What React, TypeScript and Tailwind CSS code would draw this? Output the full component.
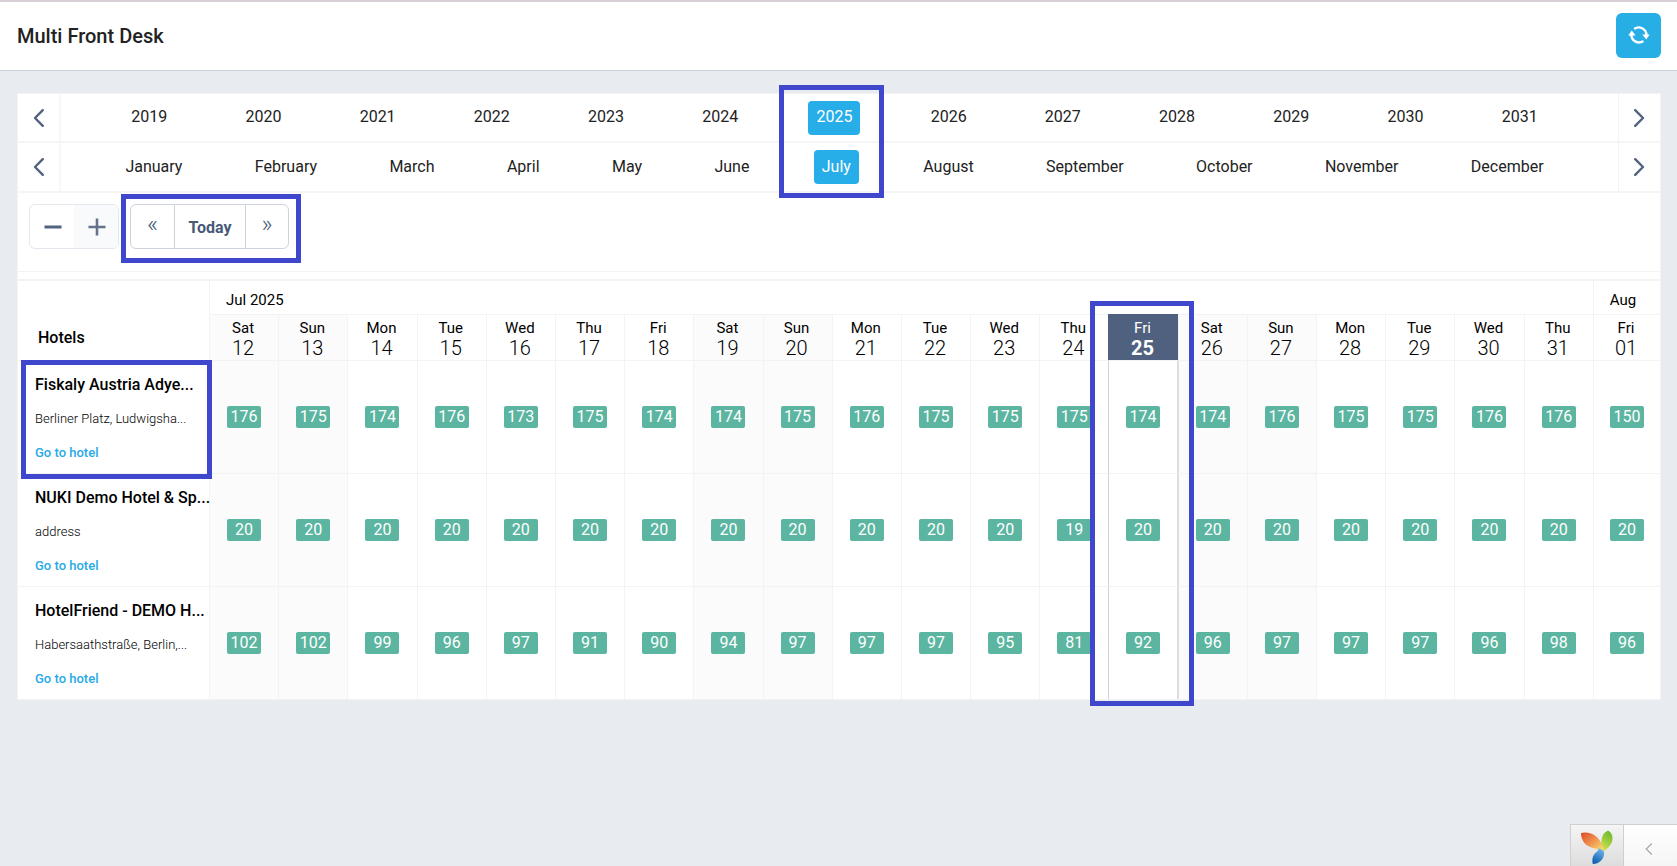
import { useState } from "react";
import type { ReactNode } from "react";

interface Day {
    name: string;
    num: string;
    weekend?: boolean;
    today?: boolean;
}

interface Hotel {
    name: string;
    address: string;
    rooms: number[];
}

const YEARS = [2019, 2020, 2021, 2022, 2023, 2024, 2025, 2026, 2027, 2028, 2029, 2030, 2031];

const MONTHS = [
    "January", "February", "March", "April", "May", "June",
    "July", "August", "September", "October", "November", "December",
];

const WEEKDAYS = ["Sat", "Sun", "Mon", "Tue", "Wed", "Thu", "Fri"];

// 12 Jul - 01 Aug 2025
const DAYS: Day[] = Array.from({ length: 21 }, (_, i) => ({
    name: WEEKDAYS[i % 7],
    num: i === 20 ? "01" : String(12 + i),
    weekend: i % 7 < 2,
    today: i === 13,
}));

const HOTELS: Hotel[] = [
    {
        name: "Fiskaly Austria Adye...",
        address: "Berliner Platz, Ludwigsha...",
        rooms: [176, 175, 174, 176, 173, 175, 174, 174, 175, 176, 175, 175, 175, 174, 174, 176, 175, 175, 176, 176, 150],
    },
    {
        name: "NUKI Demo Hotel & Sp...",
        address: "address",
        rooms: [20, 20, 20, 20, 20, 20, 20, 20, 20, 20, 20, 20, 19, 20, 20, 20, 20, 20, 20, 20, 20],
    },
    {
        name: "HotelFriend - DEMO H...",
        address: "Habersaathstraße, Berlin,...",
        rooms: [102, 102, 99, 96, 97, 91, 90, 94, 97, 97, 97, 95, 81, 92, 96, 97, 97, 97, 96, 98, 96],
    },
];

function cellClass(i: number) {
    if (DAYS[i].today) return "border-r border-r-[#d9dde4] border-l-[#cdd2dc]";
    // the day after today closes today's column on the right
    if (i > 0 && DAYS[i - 1].today) return "border-l-[#d9dde4] bg-[#fbfbfb]";
    return DAYS[i].weekend ? "border-l-[#f3f3f3] bg-[#fbfbfb]" : "border-l-[#f3f3f3]";
}

function Chevron({ right }: { right?: boolean }) {
    return (
        <svg width="12" height="20" viewBox="0 0 12 20" fill="none" stroke="#52627f" strokeWidth="2.4" strokeLinecap="round" strokeLinejoin="round">
            <path d={right ? "M1.2 2.2 9 10l-7.8 7.8" : "M9.8 2.2 2 10l7.8 7.8"} />
        </svg>
    );
}

function RefreshIcon() {
    return (
        <svg width="22" height="20" viewBox="0 0 22 20" fill="none" stroke="#fff" strokeWidth="2.4">
            <path d="M6.200 4A7.600 7.600 0 0 1 18.400 10" />
            <path d="M15.400 16A7.600 7.600 0 0 1 3.400 10" />
            <path d="M14.200 9.600h7.400l-3.300 4.800z" fill="#fff" stroke="none" />
            <path d="M.2 10.400h7.400L3.800 5.400z" fill="#fff" stroke="none" />
        </svg>
    );
}

function YiiLogo() {
    return (
        <svg width="34" height="35" viewBox="0 0 34 35">
            <defs>
                <linearGradient id="petalRed" x1="0" y1="0" x2="1" y2="1">
                    <stop offset="0" stopColor="#dc4a26" />
                    <stop offset="0.5" stopColor="#f0944f" />
                    <stop offset="1" stopColor="#fbe97b" />
                </linearGradient>
                <linearGradient id="petalGreen" x1="0.7" y1="0" x2="0.3" y2="1">
                    <stop offset="0" stopColor="#6cb92d" />
                    <stop offset="1" stopColor="#cfe04e" />
                </linearGradient>
                <linearGradient id="petalBlue" x1="0.7" y1="0" x2="0.3" y2="1">
                    <stop offset="0" stopColor="#6fb2e6" />
                    <stop offset="1" stopColor="#0b5fb2" />
                </linearGradient>
            </defs>
            <path d="M24 21C20 15 20 4 28 .5 31 2 32.500 5 32.500 8.500 32.500 13.500 28.500 18 24 21z" fill="url(#petalGreen)" />
            <path d="M1 3C9 1 21 4.500 24 21.500 19 18.500 14 19 9 16.500 4 14 1 9 1 3z" fill="url(#petalRed)" />
            <path d="M19 18.500C21 19.200 23 20.300 24 21.500 25 28 20 34 12.800 34 11.500 28 13.500 24.500 16 22.500 17.500 21.200 18.500 20 19 18.500z" fill="url(#petalBlue)" />
        </svg>
    );
}

// Frame drawn over a part of the screen to point it out
function Highlight({ className }: { className: string }) {
    return <span className={`pointer-events-none absolute z-10 border-[5px] border-[#3f48cc] ${className}`} />;
}

function PickerRow({ label, children }: { label: string; children: ReactNode }) {
    return (
        <div className="flex items-stretch border-b-2 border-[#f5f5f5]">
            <button aria-label={`Previous ${label}`} className="flex w-[43px] items-center justify-center border-r-2 border-[#f8f8f8]">
                <Chevron />
            </button>
            <div className="flex flex-1 items-center justify-evenly pr-2.5">{children}</div>
            <button aria-label={`Next ${label}`} className="flex w-[42px] items-center justify-center border-l border-[#f3f3f3]">
                <Chevron right />
            </button>
        </div>
    );
}

interface PickerItemProps {
    active: boolean;
    onClick: () => void;
    className: string;
    children: ReactNode;
}

function PickerItem({ active, onClick, className, children }: PickerItemProps) {
    return (
        <button
            onClick={onClick}
            className={`h-[34px] rounded px-2 text-base ${className} ${active ? "bg-[#27aee8] text-white" : "text-[#222]"}`}
        >
            {children}
        </button>
    );
}

export default function App() {
    const [year, setYear] = useState(2025);
    const [month, setMonth] = useState("July");

    return (
        <div className="relative min-h-screen bg-[#e8ebf0] font-[Roboto,sans-serif] text-black">
            <header className="flex h-[71px] items-center justify-between border-t-2 border-b border-t-[#d9cdd6] border-b-[#cdd2da] bg-white px-4 pb-0.5">
                <h1 className="pt-0.5 pl-px text-xl font-medium text-[#222]">Multi Front Desk</h1>
                <button aria-label="Refresh" className="flex size-[45px] items-center justify-center rounded-md bg-[#27aee5]">
                    <RefreshIcon />
                </button>
            </header>

            <main className="mx-4 mt-[22px] ml-[17px] border border-[#f3f3f3] bg-white">
                <PickerRow label="years">
                    {YEARS.map((y) => (
                        <div key={y} className="relative flex h-[47px] items-center">
                            <PickerItem active={y === year} onClick={() => setYear(y)} className="pb-0.5">{y}</PickerItem>
                            {y === 2025 && <Highlight className="-top-[9px] -left-[29px] h-[113px] w-[105px]" />}
                        </div>
                    ))}
                </PickerRow>
                <PickerRow label="months">
                    {MONTHS.map((m) => (
                        <div key={m} className="flex h-12 items-center">
                            <PickerItem active={m === month} onClick={() => setMonth(m)} className="pb-px">{m}</PickerItem>
                        </div>
                    ))}
                </PickerRow>

                <div className="flex h-[79px] items-start gap-[11px] border-b border-[#f3f3f3] px-[11px] pt-[11px]">
                    <div className="flex h-[45px] w-[90px] overflow-hidden rounded-md border border-[#e4e8ee]">
                        <button aria-label="Zoom out" className="flex flex-1 items-center justify-center pl-0.5">
                            <svg width="18" height="18" viewBox="0 0 18 18" stroke="#51647f" strokeWidth="3">
                                <path d="M.5 9h17" />
                            </svg>
                        </button>
                        <button aria-label="Zoom in" className="flex flex-1 items-center justify-center bg-[#f9fafc] pl-0.5">
                            <svg width="18" height="18" viewBox="0 0 18 18" stroke="#62738b" strokeWidth="2.600">
                                <path d="M.5 9h17M9 .5v17" />
                            </svg>
                        </button>
                    </div>
                    <div className="relative flex h-[45px] rounded-md border border-[#cdd3dc] text-[#475a78]">
                        <button aria-label="Back" className="w-[43px] pb-1.5 text-2xl font-light">«</button>
                        <button className="w-[72px] border-x border-[#cdd3dc] pt-0.5 text-base font-bold">Today</button>
                        <button aria-label="Forward" className="w-[42px] pb-1.5 text-2xl font-light">»</button>
                        <Highlight className="-top-[11px] -left-[10px] h-[69px] w-[180px]" />
                    </div>
                </div>

                <table className="mt-[7px] w-full table-fixed border-separate border-spacing-0 border-t-2 border-[#f3f3f3]">
                    <colgroup>
                        <col className="w-[191px]" />
                        <col span={20} />
                        <col className="w-[67px]" />
                    </colgroup>
                    <thead>
                        <tr className="h-[33px]">
                            <th rowSpan={2} className="pb-2.5 pl-5 text-left align-bottom text-base font-medium">Hotels</th>
                            <th colSpan={20} className="border-l border-[#f3f3f3] pt-1 pb-0 pl-4 text-left text-[15px] leading-5 font-normal">Jul 2025</th>
                            <th className="border-l border-[#f3f3f3] pt-1 pr-2 pb-0 text-[15px] leading-5 font-normal">Aug</th>
                        </tr>
                        <tr className="h-[46px]">
                            {DAYS.map((day) => (
                                <th
                                    key={day.num}
                                    className={`border-t border-l p-0 pt-px pr-0.5 font-normal ${
                                        day.today
                                            ? "relative border-[#50617f] bg-[#50617f] text-white"
                                            : day.weekend
                                              ? "border-[#f3f3f3] bg-[#fbfbfb]"
                                              : "border-[#f3f3f3]"
                                    }`}
                                >
                                    <div className="text-[15px] leading-5">{day.name}</div>
                                    <div className={`text-xl leading-5 ${day.today ? "font-bold" : "font-light"}`}>{day.num}</div>
                                    {day.today && <Highlight className="-top-[14px] -left-[19px] h-[405px] w-[104px]" />}
                                </th>
                            ))}
                        </tr>
                    </thead>
                    <tbody>
                        {HOTELS.map((hotel, row) => (
                            <tr key={hotel.name} className="h-[113px]">
                                <td className="relative border-t border-[#f3f3f3] p-0 pt-1 pl-[17px] whitespace-nowrap">
                                    <div className="text-base leading-[34px] font-medium">{hotel.name}</div>
                                    <div className="text-[13px] leading-[34px] font-light">{hotel.address}</div>
                                    <a href="#" className="block text-[13px] leading-[34px] font-medium text-[#27aae6]">Go to hotel</a>
                                    {row === 0 && <Highlight className="-top-px left-[3px] h-[119px] w-[191px]" />}
                                </td>
                                {hotel.rooms.map((count, i) => (
                                    <td key={i} className={`border-t border-l border-t-[#f3f3f3] p-0 ${cellClass(i)}`}>
                                        <div className="mx-auto h-[22px] w-[34px] rounded-xs bg-[#5bb5a0] text-center text-base leading-[22px] text-white">
                                            {count}
                                        </div>
                                    </td>
                                ))}
                            </tr>
                        ))}
                    </tbody>
                </table>
            </main>

            <div className="absolute right-0 bottom-0 flex h-[42px] border-t border-l border-[#cfcfcf]">
                <a href="#" aria-label="Debugger" className="flex w-[53px] items-center justify-center border-r border-[#cfcfcf] bg-linear-to-b from-[#f5f5f5] to-[#dddddd] pt-1">
                    <YiiLogo />
                </a>
                <button aria-label="Open toolbar" className="flex w-[53px] items-center justify-center bg-linear-to-b from-white to-[#f5f5f5] pt-1.5 pr-1">
                    <svg width="8" height="12" viewBox="0 0 8 12" fill="none" stroke="#a8a8a8" strokeWidth="1.2">
                        <path d="M6.800.5 1.200 6l5.600 5.500" />
                    </svg>
                </button>
            </div>
        </div>
    );
}
